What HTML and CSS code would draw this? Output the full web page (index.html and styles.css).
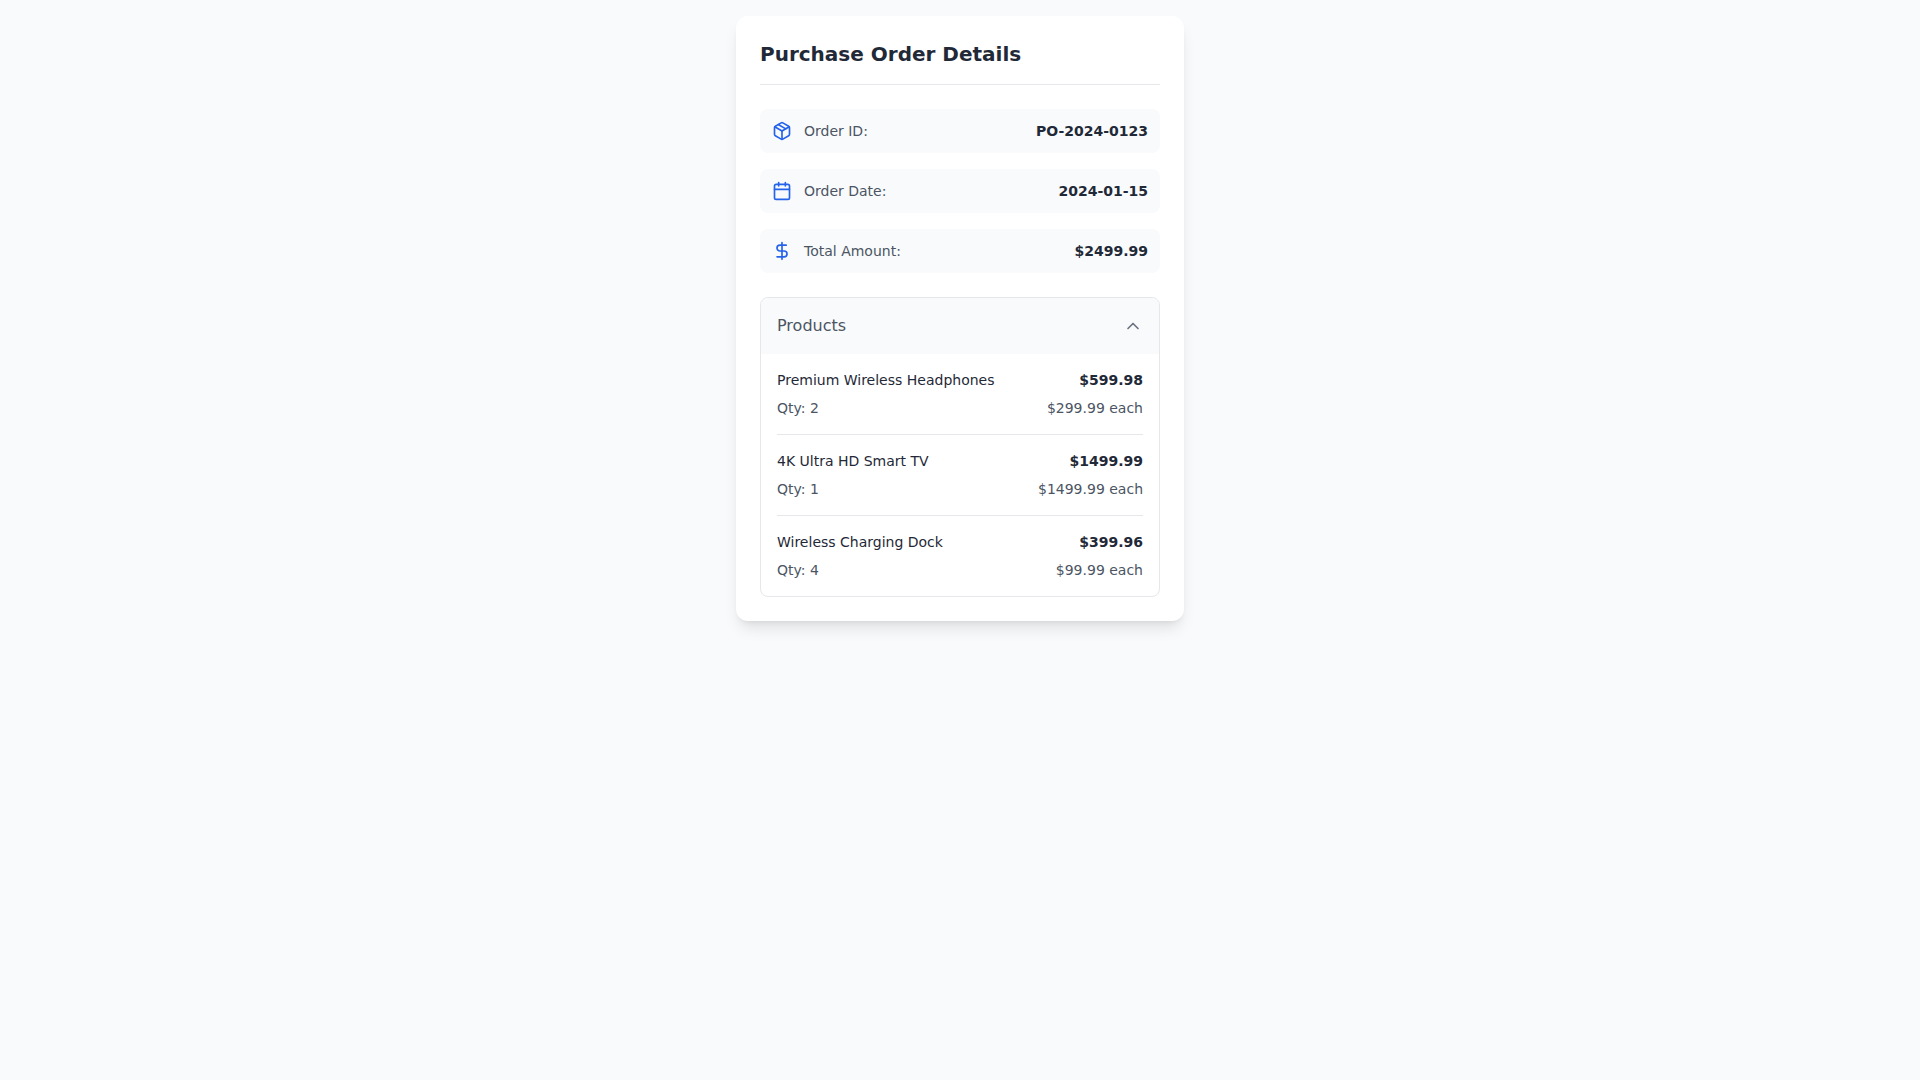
FILE: index.html
```html
<!DOCTYPE html>
<html>

<head>
    <title>Purchase Order Details</title>
    <link rel="stylesheet" href="styles.css">
</head>

<body>
    <div class="card">
        <h2 class="card-title">Purchase Order Details</h2>

        <div class="summary">
            <div class="summary-row">
                <div class="summary-label">
                    <svg class="icon" viewBox="0 0 24 24">
                        <path d="m7.5 4.27 9 5.15" />
                        <path d="M21 8a2 2 0 0 0-1-1.73l-7-4a2 2 0 0 0-2 0l-7 4A2 2 0 0 0 3 8v8a2 2 0 0 0 1 1.73l7 4a2 2 0 0 0 2 0l7-4A2 2 0 0 0 21 16Z" />
                        <path d="m3.3 7 8.7 5 8.7-5" />
                        <path d="M12 22V12" />
                    </svg>
                    <span>Order ID:</span>
                </div>
                <span class="summary-value">PO-2024-0123</span>
            </div>

            <div class="summary-row">
                <div class="summary-label">
                    <svg class="icon" viewBox="0 0 24 24">
                        <path d="M8 2v4" />
                        <path d="M16 2v4" />
                        <rect width="18" height="18" x="3" y="4" rx="2" />
                        <path d="M3 10h18" />
                    </svg>
                    <span>Order Date:</span>
                </div>
                <span class="summary-value">2024-01-15</span>
            </div>

            <div class="summary-row">
                <div class="summary-label">
                    <svg class="icon" viewBox="0 0 24 24">
                        <line x1="12" x2="12" y1="2" y2="22" />
                        <path d="M17 5H9.5a3.5 3.5 0 0 0 0 7h5a3.5 3.5 0 0 1 0 7H6" />
                    </svg>
                    <span>Total Amount:</span>
                </div>
                <span class="summary-value">$2499.99</span>
            </div>
        </div>

        <div class="products">
            <div class="products-header">
                <span>Products</span>
                <svg class="chevron" viewBox="0 0 24 24">
                    <path d="m18 15-6-6-6 6" />
                </svg>
            </div>

            <div class="products-list">
                <div class="product">
                    <div class="product-line">
                        <span class="product-name">Premium Wireless Headphones</span>
                        <span class="product-total">$599.98</span>
                    </div>
                    <div class="product-line product-meta">
                        <span>Qty: 2</span>
                        <span>$299.99 each</span>
                    </div>
                </div>

                <div class="product">
                    <div class="product-line">
                        <span class="product-name">4K Ultra HD Smart TV</span>
                        <span class="product-total">$1499.99</span>
                    </div>
                    <div class="product-line product-meta">
                        <span>Qty: 1</span>
                        <span>$1499.99 each</span>
                    </div>
                </div>

                <div class="product">
                    <div class="product-line">
                        <span class="product-name">Wireless Charging Dock</span>
                        <span class="product-total">$399.96</span>
                    </div>
                    <div class="product-line product-meta">
                        <span>Qty: 4</span>
                        <span>$99.99 each</span>
                    </div>
                </div>
            </div>
        </div>
    </div>
</body>

</html>
```

FILE: styles.css
```css
body {
    margin: 0;
    min-height: 100vh;
    padding-top: 16px;
    box-sizing: border-box;
    background-color: #f9fafb;
    font-family: "DejaVu Sans", sans-serif;
    font-size: 14px;
    line-height: 20px;
}

.card {
    width: 448px;
    margin: 0 auto;
    padding: 24px;
    box-sizing: border-box;
    background-color: #fff;
    border-radius: 12px;
    box-shadow: 0 10px 15px -3px rgba(0, 0, 0, 0.1), 0 4px 6px -4px rgba(0, 0, 0, 0.1);
}

.card-title {
    margin: 0 0 24px;
    padding-bottom: 16px;
    border-bottom: 1px solid #e5e7eb;
    color: #1f2937;
    font-size: 20px;
    line-height: 28px;
    font-weight: 700;
}

.summary {
    display: flex;
    flex-direction: column;
    gap: 16px;
}

.summary-row {
    display: flex;
    justify-content: space-between;
    align-items: center;
    padding: 12px;
    background-color: #f9fafb;
    border-radius: 8px;
}

.summary-label {
    display: flex;
    align-items: center;
    gap: 12px;
    color: #4b5563;
}

.summary-value {
    color: #1f2937;
    font-weight: 700;
}

.icon {
    width: 20px;
    height: 20px;
    fill: none;
    stroke: #2563eb;
    stroke-width: 2;
    stroke-linecap: round;
    stroke-linejoin: round;
}

.products {
    margin-top: 24px;
    border: 1px solid #e5e7eb;
    border-radius: 8px;
    overflow: hidden;
}

.products-header {
    display: flex;
    justify-content: space-between;
    align-items: center;
    padding: 16px;
    background-color: #f9fafb;
    color: #4b5563;
    font-size: 16px;
    line-height: 24px;
}

.chevron {
    width: 20px;
    height: 20px;
    fill: none;
    stroke: #6b7280;
    stroke-width: 2;
    stroke-linecap: round;
    stroke-linejoin: round;
}

.products-list {
    padding: 0 16px;
}

.product {
    padding: 16px 0;
    border-bottom: 1px solid #e5e7eb;
}

.product:last-child {
    border-bottom: none;
}

.product-line {
    display: flex;
    justify-content: space-between;
}

.product-name {
    color: #1f2937;
}

.product-total {
    color: #1f2937;
    font-weight: 700;
}

.product-meta {
    margin-top: 8px;
    color: #4b5563;
}
```
